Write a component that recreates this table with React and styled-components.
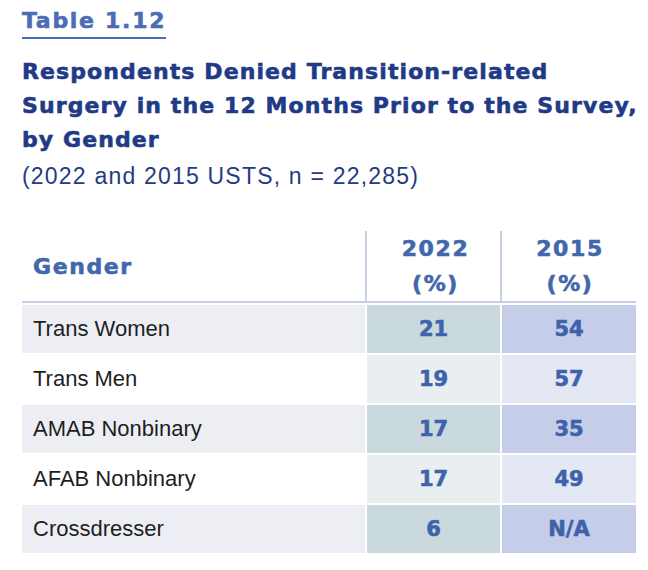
import React from 'react';
import styled, { createGlobalStyle } from 'styled-components';

const GlobalStyle = createGlobalStyle`
  html, body {
    margin: 0;
    padding: 0;
    background: #ffffff;
  }
`;

const heavy = `"DejaVu Sans", "Liberation Sans", sans-serif`;

const Page = styled.div`
  padding: 8px 0 0 22px;
  width: 648px;
  box-sizing: border-box;
`;

const TableLabel = styled.div`
  display: inline-block;
  font-family: ${heavy};
  font-weight: 700;
  font-size: 22px;
  letter-spacing: 1.7px;
  line-height: 26px;
  color: #4a6db3;
  -webkit-text-stroke: 0.6px #4a6db3;
  padding-bottom: 3px;
  border-bottom: 2px solid #4a6db3;
`;

const Heading = styled.h1`
  margin: 16px 0 0;
  white-space: nowrap;
  font-family: ${heavy};
  font-weight: 700;
  font-size: 22px;
  letter-spacing: 1.1px;
  line-height: 34px;
  color: #1f3a86;
  -webkit-text-stroke: 0.6px #1f3a86;
`;

const Subtitle = styled.div`
  margin-top: 4px;
  white-space: nowrap;
  font-family: "Liberation Sans", Arial, sans-serif;
  font-size: 23px;
  letter-spacing: 1.2px;
  line-height: 30px;
  color: #253b82;
`;

const Table = styled.div`
  margin-top: 40px;
  width: 614px;
  display: grid;
  grid-template-columns: 343px 133px 134px;
  column-gap: 2px;
  row-gap: 2px;
`;

const HeadCell = styled.div`
  height: 72px;
  box-sizing: border-box;
  display: flex;
  flex-direction: column;
  justify-content: center;
  align-items: ${p => (p.$first ? 'flex-start' : 'center')};
  padding-left: ${p => (p.$first ? '11px' : '2px')};
  border-bottom: 2px solid #c6cee6;
  border-left: ${p => (p.$first ? 'none' : '2px solid #c8d0e6')};
  margin-left: ${p => (p.$first ? '0' : '-2px')};
  margin-right: ${p => (p.$last ? '0' : '-2px')};
  font-family: ${heavy};
  font-weight: 700;
  font-size: 22px;
  letter-spacing: 1.6px;
  line-height: 35px;
  color: #4167ad;
  -webkit-text-stroke: 0.6px #4167ad;
`;

const LabelCell = styled.div`
  height: 48px;
  display: flex;
  align-items: center;
  padding-left: 11px;
  background: ${p => (p.$odd ? '#eceef4' : '#ffffff')};
  font-family: "Liberation Sans", Arial, sans-serif;
  font-size: 22px;
  color: #1e1e1e;
`;

const ValueCell = styled.div`
  height: 48px;
  display: flex;
  align-items: center;
  justify-content: center;
  background: ${p => p.$bg};
  font-family: ${heavy};
  font-weight: 700;
  font-size: 21px;
  color: #3e63aa;
  -webkit-text-stroke: 0.6px #3e63aa;
`;

const rows = [
  { gender: 'Trans Women', y2022: '21', y2015: '54' },
  { gender: 'Trans Men', y2022: '19', y2015: '57' },
  { gender: 'AMAB Nonbinary', y2022: '17', y2015: '35' },
  { gender: 'AFAB Nonbinary', y2022: '17', y2015: '49' },
  { gender: 'Crossdresser', y2022: '6', y2015: 'N/A' },
];

const App = () => {
  return (
    <Page>
      <GlobalStyle />
      <TableLabel>Table 1.12</TableLabel>
      <Heading>
        Respondents Denied Transition-related
        <br />
        Surgery in the 12 Months Prior to the Survey,
        <br />
        by Gender
      </Heading>
      <Subtitle>(2022 and 2015 USTS, n = 22,285)</Subtitle>

      <Table>
        <HeadCell $first>Gender</HeadCell>
        <HeadCell>
          <span>2022</span>
          <span>(%)</span>
        </HeadCell>
        <HeadCell $last>
          <span>2015</span>
          <span>(%)</span>
        </HeadCell>

        {rows.map((row, i) => {
          const odd = i % 2 === 0;
          return (
            <React.Fragment key={row.gender}>
              <LabelCell $odd={odd}>{row.gender}</LabelCell>
              <ValueCell $bg={odd ? '#c9d9de' : '#e9eef1'}>{row.y2022}</ValueCell>
              <ValueCell $bg={odd ? '#c6cde8' : '#e4e8f4'}>{row.y2015}</ValueCell>
            </React.Fragment>
          );
        })}
      </Table>
    </Page>
  );
};

export default App;
